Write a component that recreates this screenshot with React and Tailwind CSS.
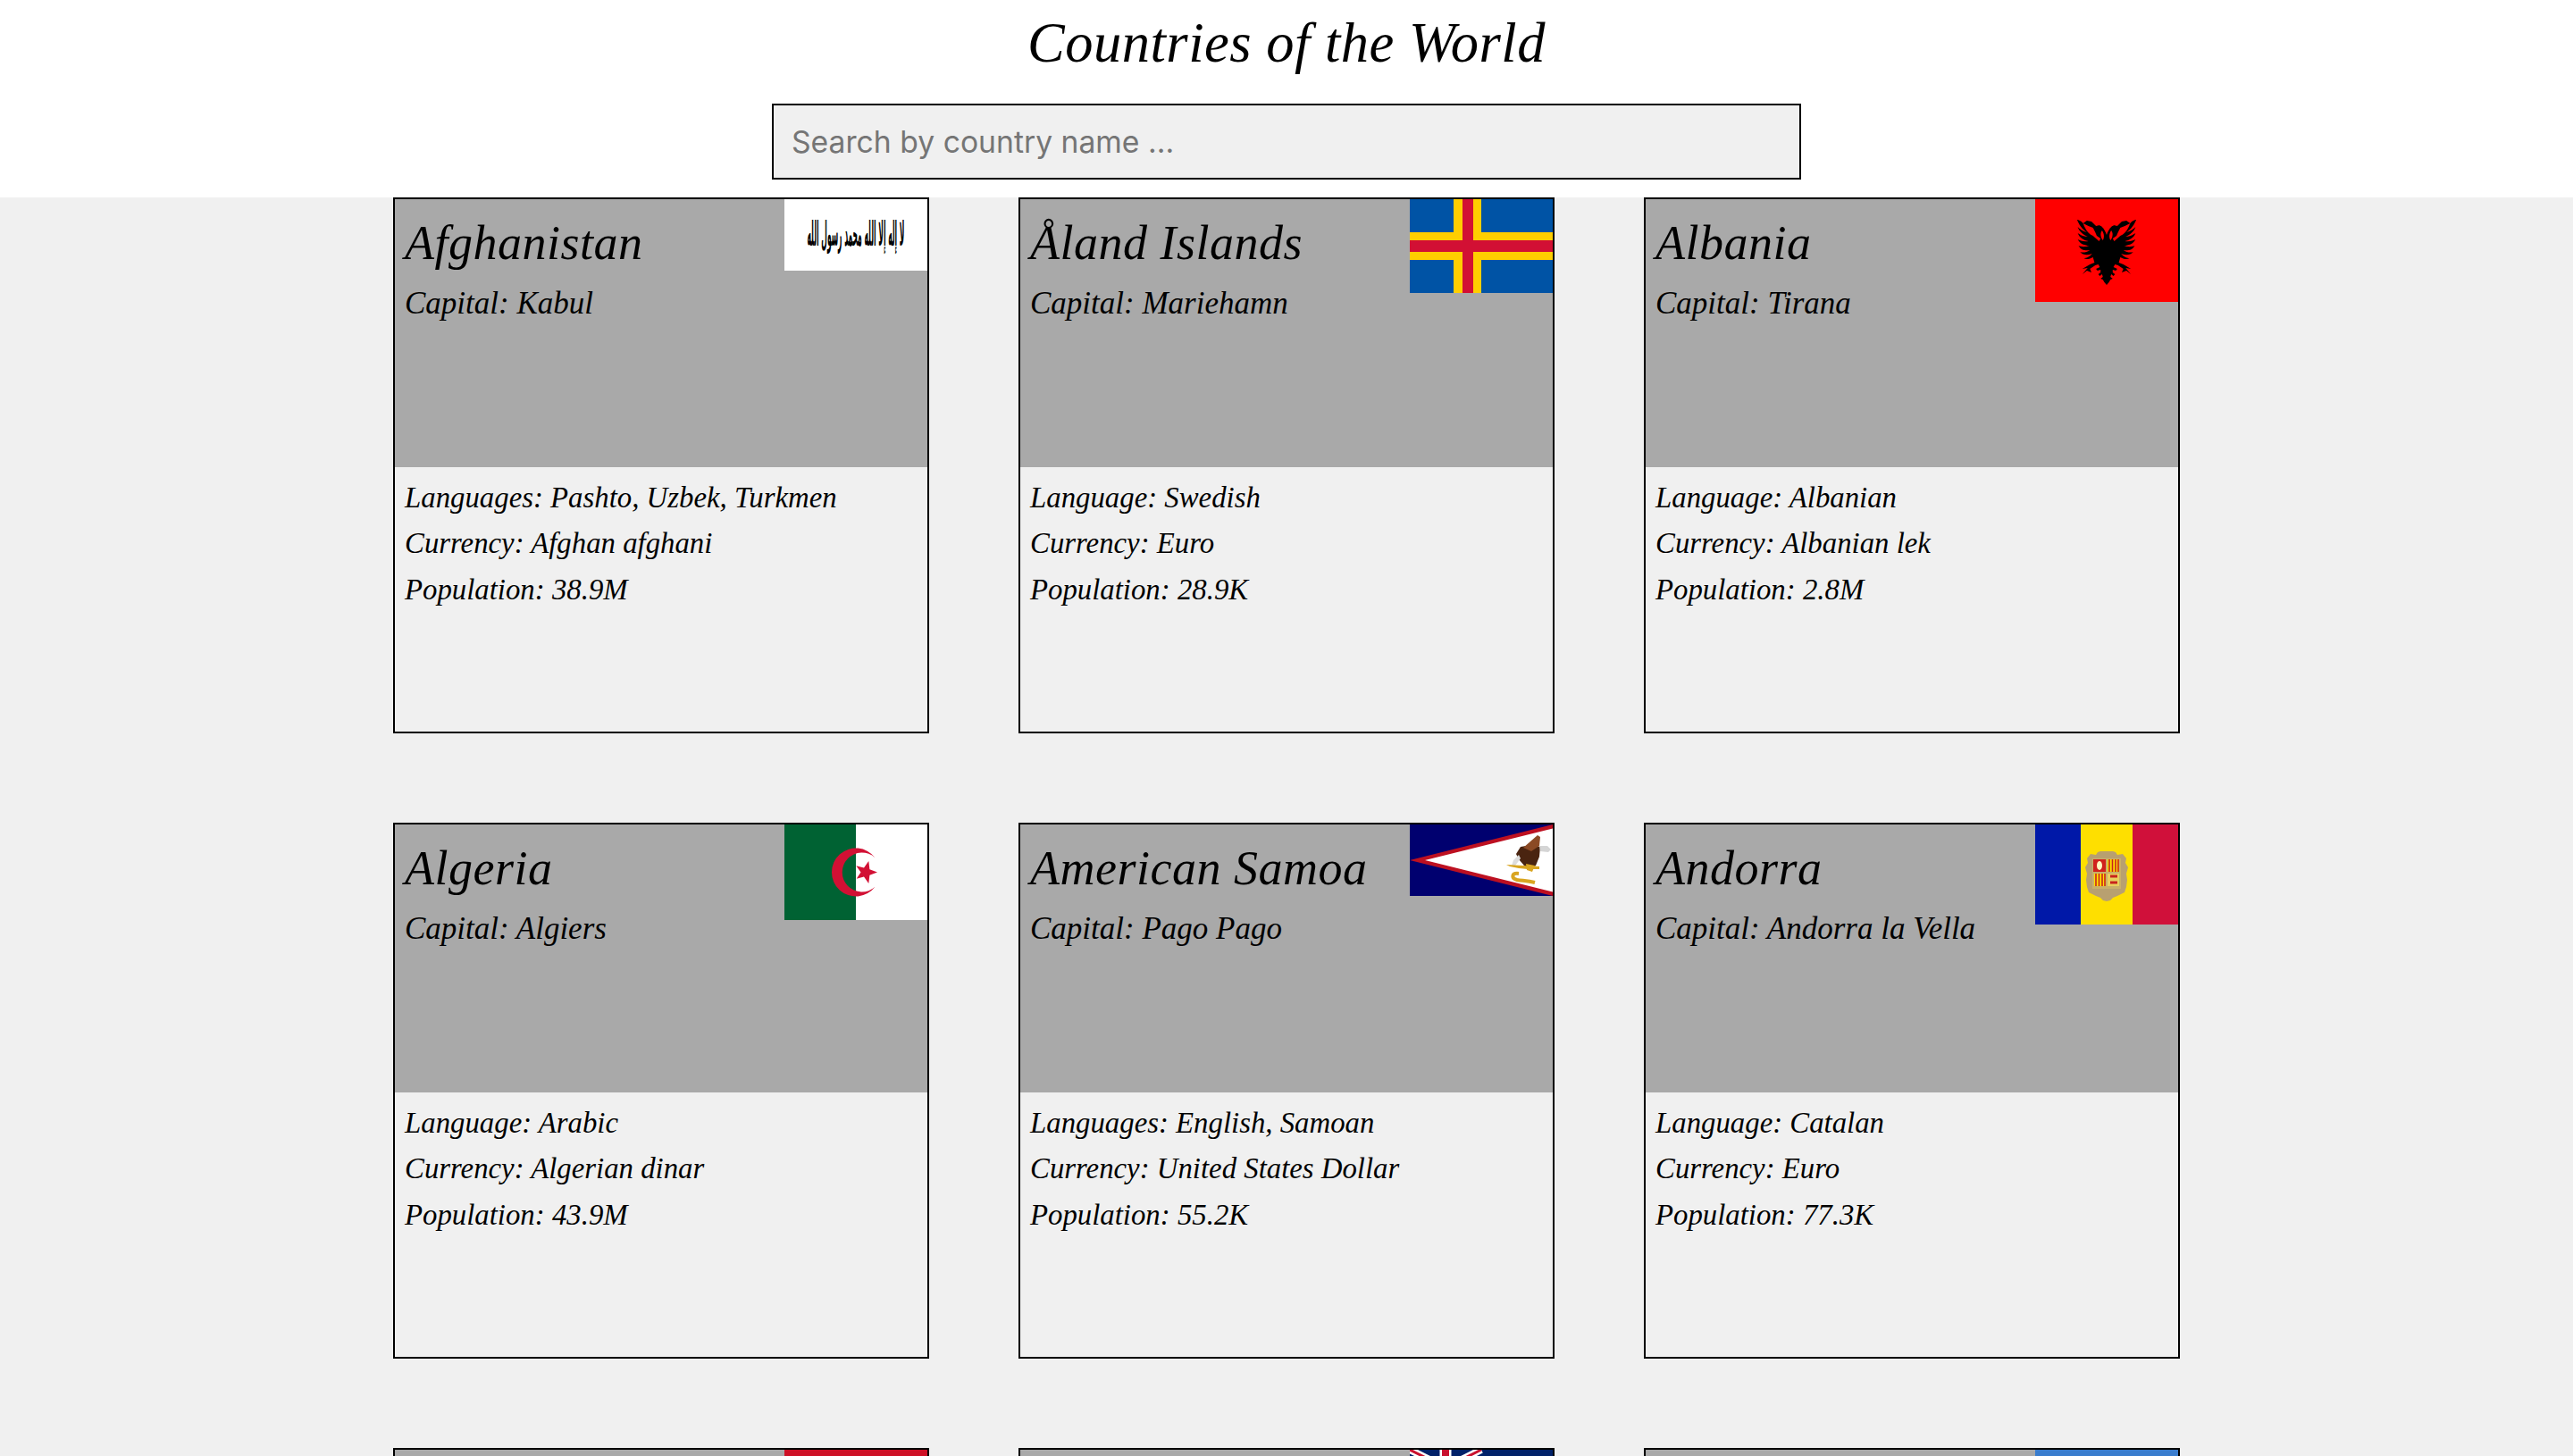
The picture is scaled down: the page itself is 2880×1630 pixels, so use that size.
import React from "react";

const Afghanistan = () => (
  <svg viewBox="0 0 160 80" className="block w-full h-full">
    <rect width="160" height="80" fill="#fff" />
    <text
      transform="translate(80 52) scale(0.2 1)"
      textAnchor="middle"
      direction="rtl"
      fontSize="38"
      fontWeight="700"
      fontFamily="'DejaVu Sans', sans-serif"
      fill="#000"
    >
      لا إله إلا الله محمد رسول الله
    </text>
  </svg>
);

const Aland = () => (
  <svg viewBox="0 0 160 105" className="block w-full h-full">
    <rect width="160" height="105" fill="#0053a5" />
    <rect x="49" width="31" height="105" fill="#ffce00" />
    <rect y="37" width="160" height="31" fill="#ffce00" />
    <rect x="59" width="12" height="105" fill="#d21034" />
    <rect y="46" width="160" height="13" fill="#d21034" />
  </svg>
);

const albaniaHalf =
  "M80 40 C78 35 75 31 71 29 L66 30 L60 25 L54 24 L49 27 L56 30 L62 32 L65 37 L67 41 L72 44 L70 47 L62 41 C56 39 52 34 49 27 C46 24 43 23 41 23 C44 29 48 34 54 37 C49 36 44 33 42 31 C43 35 49 40 55 42 C49 42 44 39 42 38 C44 43 50 46 56 47 C50 48 45 46 42 45 C45 50 51 52 57 52 C51 54 46 53 43 52 C46 57 52 58 58 57 C53 60 48 60 45 59 C49 63 55 63 61 61 C57 65 53 66 50 66 C53 68 58 67 62 65 L64 71 L58 73 L48 78 L55 77 L48 84 L54 80 L60 82 L58 78 L65 74 L69 73 L71 76 L66 78 L68 80 L72 79 L72 82 L69 84 L71 86 L74 84 L75 87 L72 89 L75 90 L77 93 L80 96 Z";

const Albania = () => (
  <svg viewBox="0 0 160 115" className="block w-full h-full">
    <rect width="160" height="115" fill="#f00" />
    <g transform="translate(12 0) scale(0.85 1)">
      <path d={albaniaHalf} fill="#000" />
      <path d={albaniaHalf} fill="#000" transform="matrix(-1 0 0 1 160 0)" />
      <circle cx="72" cy="29" r="1" fill="#f00" />
      <circle cx="88" cy="29" r="1" fill="#f00" />
      <path d="M74 35 C71 38 72 43 75 46 C77 43 77 39 74 35Z" fill="#f00" />
      <path d="M86 35 C89 38 88 43 85 46 C83 43 83 39 86 35Z" fill="#f00" />
    </g>
  </svg>
);

const Algeria = () => (
  <svg viewBox="0 0 160 107" className="block w-full h-full">
    <rect width="80" height="107" fill="#006233" />
    <rect x="80" width="80" height="107" fill="#fff" />
    <path d="M101.5 37.2 A27 27 0 1 0 101.5 69.8 A22 22 0 1 1 101.5 37.2Z" fill="#d21034" />
    <path
      d="M104 53.5 L95.4 50.2 L94.3 41 L89 48.4 L80.3 46.3 L85.5 53.5 L80.7 60.7 L89 58.6 L94.3 66 L95.4 56.8Z"
      fill="#d21034"
    />
  </svg>
);

const AmericanSamoa = () => (
  <svg viewBox="0 0 160 80" className="block w-full h-full">
    <rect width="160" height="80" fill="#00006f" />
    <path d="M160 0 L0 40 L160 80Z" fill="#bd1021" />
    <path d="M160 4.5 L17 40 L160 75.5Z" fill="#fff" />
    <path d="M119 33 L124 25 L136 23 L146 25 L145 36 L141 46 L135 50 L128 46 L122 39Z" fill="#4a2410" />
    <path d="M127 26 L143 12 L146 14 L145 24 L136 30Z" fill="#8b4a25" />
    <path d="M145 24 L154 24 L158 28 L155 31 L146 30Z" fill="#d5d5d5" />
    <path d="M122 34 L116 40 L114 46 L118 46 L124 38Z" fill="#ddd" />
    <path d="M108 45 L145 47 L145 50 L132 50 L122 49 L112 47Z" fill="#d9a520" />
    <path d="M130 44 L140 46 L137 53 L131 51Z" fill="#d9a520" />
    <path
      d="M122 55 C114 54 113 60 120 62 C126 63 132 63 140 65"
      fill="none"
      stroke="#d9a520"
      strokeWidth="4"
    />
  </svg>
);

const Andorra = () => (
  <svg viewBox="0 0 160 112" className="block w-full h-full">
    <rect width="51" height="112" fill="#0018a8" />
    <rect x="51" width="58" height="112" fill="#fedf00" />
    <rect x="109" width="51" height="112" fill="#d0103a" />
    <path
      d="M58 38 L62 33 L68 34 L70 31 L73 30 L87 30 L90 31 L92 34 L98 33 L102 38 L101 43 L104 48 L102 55 L103 62 L102 70 L100 76 L92 80 L87 82 L84 85 L80 86 L76 85 L73 82 L68 80 L60 76 L58 70 L57 62 L58 55 L56 48 L59 43Z"
      fill="#b8a070"
    />
    <rect x="64" y="38" width="32" height="34" fill="#c9b06a" />
    <rect x="65" y="39" width="14" height="14" fill="#d0221d" />
    <ellipse cx="72" cy="46" rx="3" ry="5" fill="#fff8c0" />
    <rect x="81" y="39" width="13" height="14" fill="#fedf00" />
    <path d="M83 39 V53 M86.5 39 V53 M90 39 V53 M93 39 V53" stroke="#c8241c" strokeWidth="1.6" />
    <rect x="66" y="55" width="13" height="14" fill="#fedf00" />
    <path d="M68 55 V69 M71.5 55 V69 M75 55 V69 M78 55 V69" stroke="#c8241c" strokeWidth="1.6" />
    <rect x="81" y="55" width="13" height="14" fill="#e8d060" />
    <path d="M84 58 H92 M84 65 H92" stroke="#c8241c" strokeWidth="3" />
  </svg>
);

const Angola = () => <div className="w-full h-full bg-[#ce1126]" />;
const Anguilla = () => (
  <svg viewBox="0 0 160 80" className="block w-full h-full">
    <rect width="160" height="80" fill="#012169" />
    <path d="M0 0 L80 40 M80 0 L0 40" stroke="#fff" strokeWidth="8" />
    <path d="M0 0 L80 40 M80 0 L0 40" stroke="#c8102e" strokeWidth="3" />
    <path d="M40 0 V40 M0 20 H80" stroke="#fff" strokeWidth="13" />
    <path d="M40 0 V40 M0 20 H80" stroke="#c8102e" strokeWidth="8" />
  </svg>
);
const Antarctica = () => <div className="w-full h-full bg-[#3a7dce]" />;

const countries = [
  { name: "Afghanistan", capital: "Kabul", langLabel: "Languages", langs: "Pashto, Uzbek, Turkmen", currency: "Afghan afghani", population: "38.9M", Flag: Afghanistan, flagClass: "h-[80px]" },
  { name: "Åland Islands", capital: "Mariehamn", langLabel: "Language", langs: "Swedish", currency: "Euro", population: "28.9K", Flag: Aland, flagClass: "h-[105px]" },
  { name: "Albania", capital: "Tirana", langLabel: "Language", langs: "Albanian", currency: "Albanian lek", population: "2.8M", Flag: Albania, flagClass: "h-[115px]" },
  { name: "Algeria", capital: "Algiers", langLabel: "Language", langs: "Arabic", currency: "Algerian dinar", population: "43.9M", Flag: Algeria, flagClass: "h-[107px]" },
  { name: "American Samoa", capital: "Pago Pago", langLabel: "Languages", langs: "English, Samoan", currency: "United States Dollar", population: "55.2K", Flag: AmericanSamoa, flagClass: "h-[80px]" },
  { name: "Andorra", capital: "Andorra la Vella", langLabel: "Language", langs: "Catalan", currency: "Euro", population: "77.3K", Flag: Andorra, flagClass: "h-[112px]" },
  { name: "Angola", capital: "Luanda", langLabel: "Language", langs: "Portuguese", currency: "Angolan kwanza", population: "32.9M", Flag: Angola, flagClass: "h-[107px]" },
  { name: "Anguilla", capital: "The Valley", langLabel: "Language", langs: "English", currency: "Eastern Caribbean dollar", population: "15.0K", Flag: Anguilla, flagClass: "h-[80px]" },
  { name: "Antarctica", capital: "None", langLabel: "Languages", langs: "English, Russian", currency: "None", population: "1.0K", Flag: Antarctica, flagClass: "h-[107px]" },
];

const Card = ({ country }) => {
  const { Flag } = country;
  return (
    <div className="w-[600px] h-[600px] border-2 border-black box-border">
      <div className="h-[300px] bg-[#a9a9a9] flex justify-between items-start pl-[11px]">
        <div className="pt-[19px]">
          <h2 className="text-[54px] leading-[60px] italic tracking-[0.5px]">{country.name}</h2>
          <p className="text-[35px] leading-[48px] italic mt-[14px]">Capital: {country.capital}</p>
        </div>
        <div className={`w-[160px] shrink-0 ${country.flagClass}`}>
          <Flag />
        </div>
      </div>
      <div className="pl-[11px] pt-[9px] text-[32.8px] leading-[51.4px] italic">
        <p>{country.langLabel}: {country.langs}</p>
        <p>Currency: {country.currency}</p>
        <p>Population: {country.population}</p>
      </div>
    </div>
  );
};

const App = () => {
  return (
    <div className="h-[1630px] overflow-hidden bg-[#f0f0f0] text-black font-['Liberation_Serif',serif]">
      <header className="h-[221px] bg-white flex flex-col items-center">
        <h1 className="text-[62.5px] leading-[96px] italic text-center tracking-[0.5px]">Countries of the World</h1>
        <input
          type="text"
          placeholder="Search by country name ..."
          className="mt-[20px] w-[1152px] h-[85px] box-border border-2 border-black bg-[#f0f0f0] px-[20px] text-[33.7px] font-['Inter',sans-serif] placeholder:text-[#757575] outline-none"
        />
      </header>
      <main className="w-[2000px] mx-auto grid grid-cols-3 gap-[100px]">
        {countries.map((c) => (
          <Card key={c.name} country={c} />
        ))}
      </main>
    </div>
  );
};

export default App;
